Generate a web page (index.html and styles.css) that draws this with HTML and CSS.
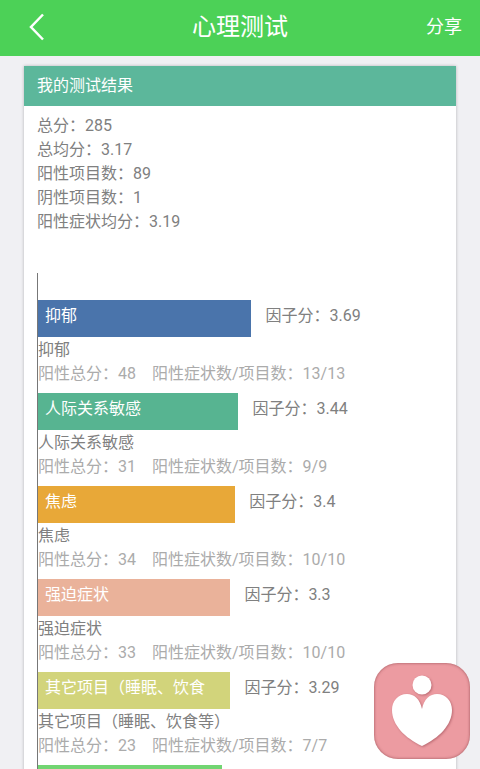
FILE: index.html
```
<!DOCTYPE html>
<html lang="zh-CN">
<head>
    <meta charset="UTF-8">
    <meta name="viewport" content="width=device-width, initial-scale=1">
    <title>心理测试</title>
    <link rel="stylesheet" href="styles.css">
</head>
<body>
    <header class="topbar">
        <button type="button" class="back" aria-label="返回">
            <svg width="16" height="28" viewBox="0 0 16 28" fill="none" stroke="currentColor" stroke-width="2.5">
                <path d="M15 1.5 L3 14 L15 26.5"/>
            </svg>
        </button>
        <h1>心理测试</h1>
        <button type="button" class="share">分享</button>
    </header>

    <main>
        <section class="card">
            <h2>我的测试结果</h2>
            <div class="card-body">
                <ul class="summary">
                    <li>总分：285</li>
                    <li>总均分：3.17</li>
                    <li>阳性项目数：89</li>
                    <li>阴性项目数：1</li>
                    <li>阳性症状均分：3.19</li>
                </ul>

                <div class="chart">
                    <div class="factor">
                        <div class="bar-row">
                            <div class="bar blue" style="width: 52.7%">抑郁</div>
                            <span>因子分：3.69</span>
                        </div>
                        <p class="name">抑郁</p>
                        <p class="detail"><span>阳性总分：48</span><span>阳性症状数/项目数：13/13</span></p>
                    </div>
                    <div class="factor">
                        <div class="bar-row">
                            <div class="bar green" style="width: 49.5%">人际关系敏感</div>
                            <span>因子分：3.44</span>
                        </div>
                        <p class="name">人际关系敏感</p>
                        <p class="detail"><span>阳性总分：31</span><span>阳性症状数/项目数：9/9</span></p>
                    </div>
                    <div class="factor">
                        <div class="bar-row">
                            <div class="bar orange" style="width: 48.7%">焦虑</div>
                            <span>因子分：3.4</span>
                        </div>
                        <p class="name">焦虑</p>
                        <p class="detail"><span>阳性总分：34</span><span>阳性症状数/项目数：10/10</span></p>
                    </div>
                    <div class="factor">
                        <div class="bar-row">
                            <div class="bar salmon" style="width: 47.5%">强迫症状</div>
                            <span>因子分：3.3</span>
                        </div>
                        <p class="name">强迫症状</p>
                        <p class="detail"><span>阳性总分：33</span><span>阳性症状数/项目数：10/10</span></p>
                    </div>
                    <div class="factor">
                        <div class="bar-row">
                            <div class="bar olive" style="width: 47.5%">其它项目（睡眠、饮食</div>
                            <span>因子分：3.29</span>
                        </div>
                        <p class="name">其它项目（睡眠、饮食等）</p>
                        <p class="detail"><span>阳性总分：23</span><span>阳性症状数/项目数：7/7</span></p>
                    </div>
                    <div class="factor">
                        <div class="bar-row">
                            <div class="bar lime" style="width: 45.5%"></div>
                        </div>
                    </div>
                </div>
            </div>
        </section>
    </main>

    <button type="button" class="float-logo" aria-label="心理咨询">
        <svg viewBox="0 0 96 96" fill="#fff">
            <circle cx="48" cy="22" r="9.5"/>
            <path d="M48 46 C46 36 40 31 33 31 C24 31 18 38 18 47 C18 62 31 75 48 83 C65 75 78 62 78 47 C78 38 72 31 63 31 C56 31 50 36 48 46 Z"/>
        </svg>
    </button>
</body>
</html>
```
FILE: styles.css
```
* {
    margin: 0;
    padding: 0;
    box-sizing: border-box;
}

body {
    height: 100vh;
    display: flex;
    flex-direction: column;
    background: #f0f0f3;
    font-family: Roboto, "Noto Sans CJK SC", sans-serif;
    font-size: 16px;
    line-height: 24px;
    color: #808080;
}

button {
    border: none;
    background: none;
    color: inherit;
    font: inherit;
    cursor: pointer;
}

.topbar {
    flex: none;
    display: grid;
    grid-template-columns: 1fr auto 1fr;
    align-items: center;
    height: 56px;
    padding: 0 18px 2px 28px;
    background: #4cd157;
    color: #fff;
}

.topbar h1 {
    font-size: 24px;
    font-weight: 400;
    line-height: 32px;
    /* balances the uneven side padding */
    margin-right: 10px;
}

.back {
    justify-self: start;
    display: flex;
}

.share {
    justify-self: end;
    font-size: 18px;
}

main {
    flex: 1;
    min-height: 0;
    padding: 10px 24px 0;
    overflow-y: auto;
    scrollbar-width: none;
}

.card {
    background: #fff;
    box-shadow: 0 0 3px rgba(0, 0, 0, 0.25);
}

.card h2 {
    padding: 8px 13px;
    background: #5cb79b;
    color: #fff;
    font-size: 16px;
    font-weight: 400;
}

.card-body {
    padding: 8px 13px;
}

.summary {
    list-style: none;
    margin-bottom: 39px;
}

.chart {
    padding-top: 27px;
    border-left: 1px solid #777;
}

.factor {
    margin-bottom: 7px;
}

.bar-row {
    display: flex;
    gap: 14px;
    height: 37px;
    margin-bottom: 1px;
}

.bar-row span {
    padding-top: 4px;
    white-space: nowrap;
}

.bar {
    flex: none;
    padding: 4px 7px 0;
    overflow: hidden;
    color: #fff;
    white-space: nowrap;
}

.blue { background: #4a74ab; }
.green { background: #57b491; }
.orange { background: #e8a838; }
.salmon { background: #eab29a; }
.olive { background: #d2d47b; }
.lime { background: #72d572; }

.detail {
    display: flex;
    gap: 16px;
    color: #ababab;
    white-space: nowrap;
}

.float-logo {
    position: fixed;
    right: 10px;
    bottom: 10px;
    width: 96px;
    height: 96px;
    border-radius: 24px;
    background: #ec9ba1;
    box-shadow: inset 0 0 3px rgba(120, 50, 55, 0.7);
}

.float-logo svg {
    display: block;
    filter: drop-shadow(1px 1px 1px rgba(140, 60, 70, 0.5));
}
```
